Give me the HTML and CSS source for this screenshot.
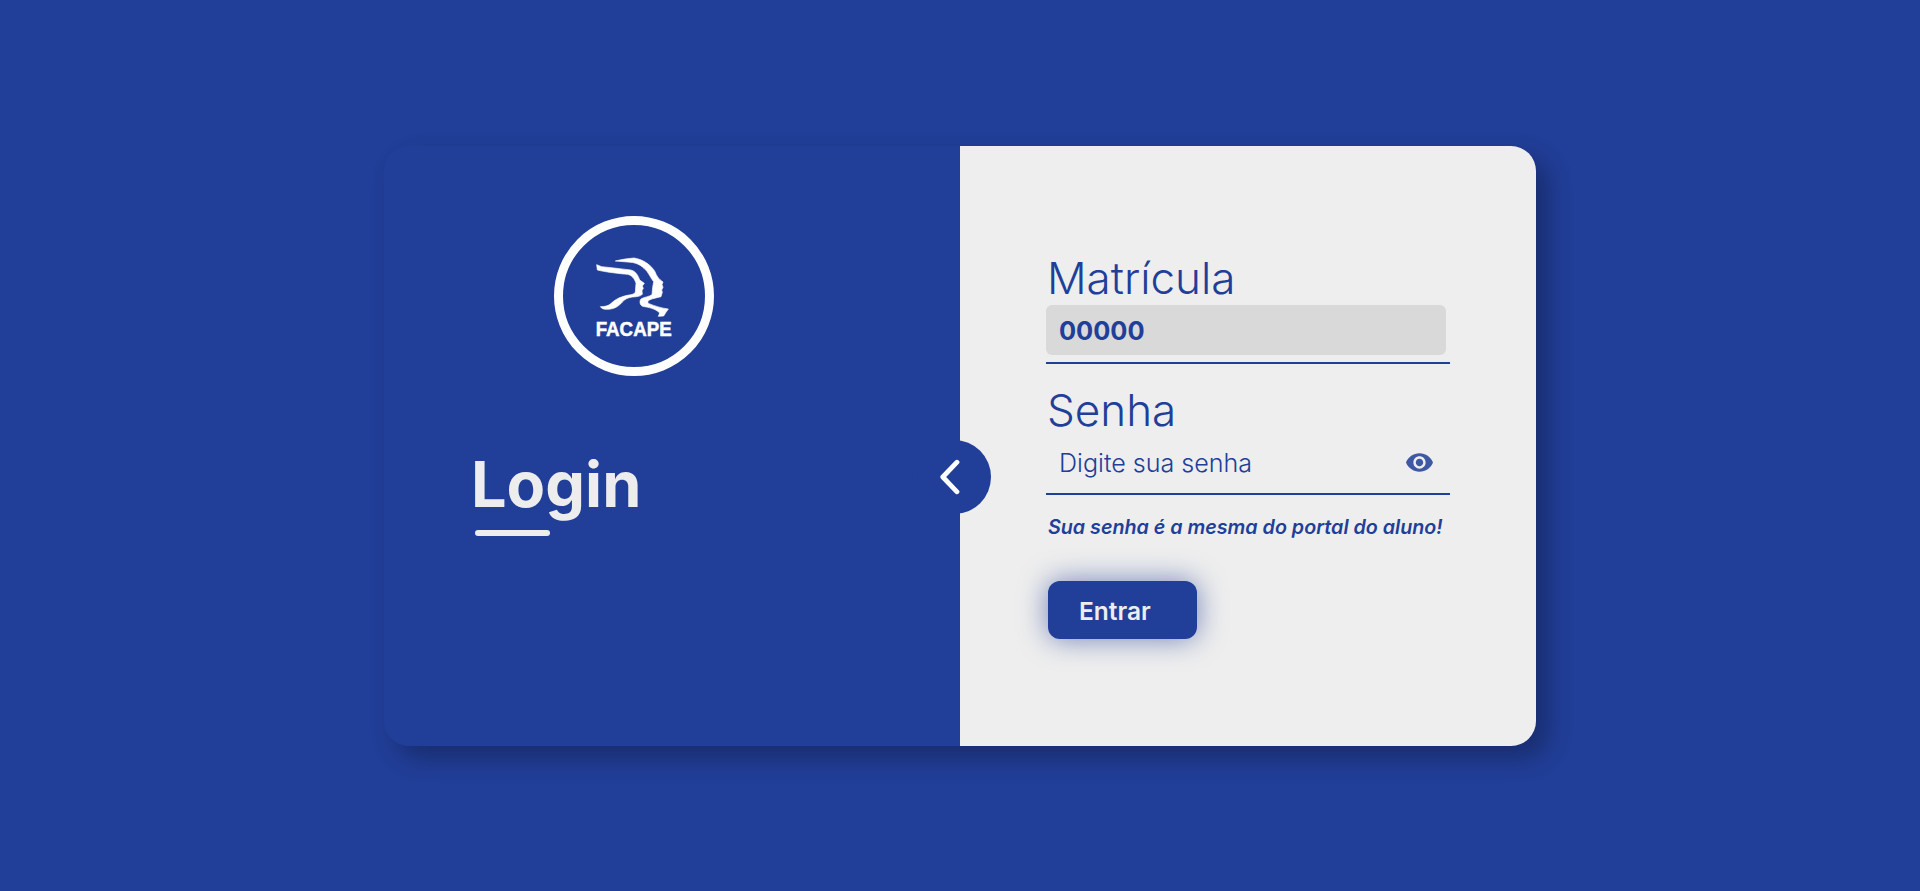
FILE: index.html
```html
<!DOCTYPE html>
<html lang="pt-BR">
<head>
<meta charset="utf-8">
<title>Login</title>
<link rel="stylesheet" href="styles.css">
</head>
<body>
<main class="card">
  <section class="brand">
    <svg class="logo" viewBox="42 48 480 480" role="img" aria-label="FACAPE">
      <circle cx="282" cy="288" r="226.5" fill="none" stroke="#fff" stroke-width="27"/>
      <path class="logo-face" d="M170 194L185 200C215 203 240 206 272 210C286 213 294 225 299 240L313 250L307 258L310 265L306 272L307 283C300 290 290 290 278 291C262 293 254 298 247 306C235 320 222 328 200 328C190 328 184 325 181 320C195 320 203 318 210 313C225 300 235 292 262 286C275 284 284 282 286 276L288 250C284 236 275 225 262 223C240 221 200 217 172 210Z"/>
      <path class="logo-face" d="M226 183C245 178 262 176 282 174C310 178 335 197 345 215C350 228 355 236 369 246L366 254L369 262L365 270L367 277L363 290C350 293 340 295 330 299C322 303 322 308 327 311C345 318 362 324 385 327L378 337L371 348L355 349L359 339C345 325 325 322 308 319C299 315 298 303 303 297C312 291 328 290 336 284L338 262L341 245C332 235 325 215 312 205C300 193 285 187 262 186Z"/>
      <text class="logo-text" x="167" y="409" textLength="228" lengthAdjust="spacingAndGlyphs">FACAPE</text>
    </svg>
    <h1 class="title">Login</h1>
    <div class="title-bar"></div>
    <a class="back" href="#" aria-label="Voltar">
      <svg class="back-icon" viewBox="0 0 20 36"><path d="M17 3.2L2.8 18L17 32.8" fill="none" stroke="#fff" stroke-width="4.8" stroke-linecap="round" stroke-linejoin="round"/></svg>
    </a>
  </section>
  <form class="form">
    <label class="label" for="matricula">Matrícula</label>
    <div class="field"><input class="input filled" id="matricula" type="text" value="00000"></div>
    <label class="label" for="senha">Senha</label>
    <div class="field password">
      <input class="input" id="senha" type="password" placeholder="Digite sua senha">
      <svg class="eye" viewBox="1 4.5 22 15"><path d="M12 4.5C7 4.5 2.73 7.61 1 12c1.73 4.39 6 7.5 11 7.5s9.27-3.11 11-7.5c-1.73-4.39-6-7.5-11-7.5zM12 17c-2.76 0-5-2.24-5-5s2.24-5 5-5 5 2.24 5 5-2.24 5-5 5zm0-8c-1.66 0-3 1.34-3 3s1.34 3 3 3 3-1.34 3-3-1.34-3-3-3z"/></svg>
    </div>
    <p class="hint">Sua senha é a mesma do portal do aluno!</p>
    <button class="submit" type="button">Entrar</button>
  </form>
</main>
</body>
</html>
```
FILE: styles.css
```css
* { box-sizing: border-box; }
body {
  margin: 0;
  padding-top: 1px;
  height: 100vh;
  display: flex;
  justify-content: center;
  align-items: center;
  overflow: hidden;
  background: #213e98;
  font-family: Inter, "Liberation Sans", sans-serif;
}
.card {
  width: 60%;
  height: 600px;
  display: flex;
  border-radius: 25px;
  box-shadow: 12px 12px 25px rgba(0, 0, 0, .27);
}
.brand {
  position: relative;
  width: 50%;
  padding: 70px 88px 0;
  background: #213e98;
  border-radius: 25px 0 0 25px;
}
.logo { display: block; width: 160px; height: 160px; margin-left: 82px; }
.logo-face { fill: #fff; stroke: #fff; stroke-width: 2; }
.logo-text { font: bold 59px "Liberation Sans", sans-serif; fill: #fff; stroke: #fff; stroke-width: 1.5; }
.title {
  margin: 69px 0 7px -1px;
  font-size: 63px;
  font-weight: 700;
  line-height: 78px;
  color: #ededed;
}
.title-bar { width: 75px; height: 6px; margin: 0 0 0 3px; border-radius: 3px; background: #ededed; }
.back {
  position: absolute;
  right: -31px;
  top: 294px;
  width: 74px;
  height: 74px;
  border-radius: 50%;
  background: #213e98;
}
.back-icon { position: absolute; left: 23px; top: 19px; width: 20px; height: 36px; }
.form {
  width: 50%;
  padding: 105px 86px 0;
  display: flex;
  flex-direction: column;
  align-items: flex-start;
  background: #eee;
  border-radius: 0 25px 25px 0;
  color: #213e98;
}
.label { padding-left: 1px; font-size: 44px; font-weight: 300; line-height: 54px; }
.field {
  width: 404px;
  height: 59px;
  border-bottom: 2px solid #213e98;
  display: flex;
  align-items: flex-start;
  position: relative;
}
.field + .label { margin-top: 19px; }
.password { height: 58px; }
.input {
  width: 400px;
  height: 50px;
  padding: 0 13px;
  border: 0;
  border-radius: 6px;
  outline: 0;
  background: transparent;
  color: #213e98;
  font: 700 25.4px Inter, "Liberation Sans", sans-serif;
}
.filled { background: #d9d9d9; }
.input::placeholder { color: #213e98; opacity: 1; font-weight: 300; font-size: 25.1px; }
.eye { position: absolute; left: 360px; top: 16px; width: 27px; height: 19px; fill: #213e98; opacity: .85; }
.hint { margin: 20px 0 0 2px; font-size: 19.7px; line-height: 24px; font-weight: 600; font-style: italic; white-space: nowrap; }
.submit {
  width: 149px;
  height: 58px;
  margin: 42px 0 0 2px;
  padding: 1px 0 0 31px;
  border: 0;
  border-radius: 12px;
  background: #213e98;
  color: #ededed;
  font: 600 24.5px Inter, "Liberation Sans", sans-serif;
  text-align: left;
  box-shadow: 0 0 28px rgba(33, 62, 152, .6);
}
```
